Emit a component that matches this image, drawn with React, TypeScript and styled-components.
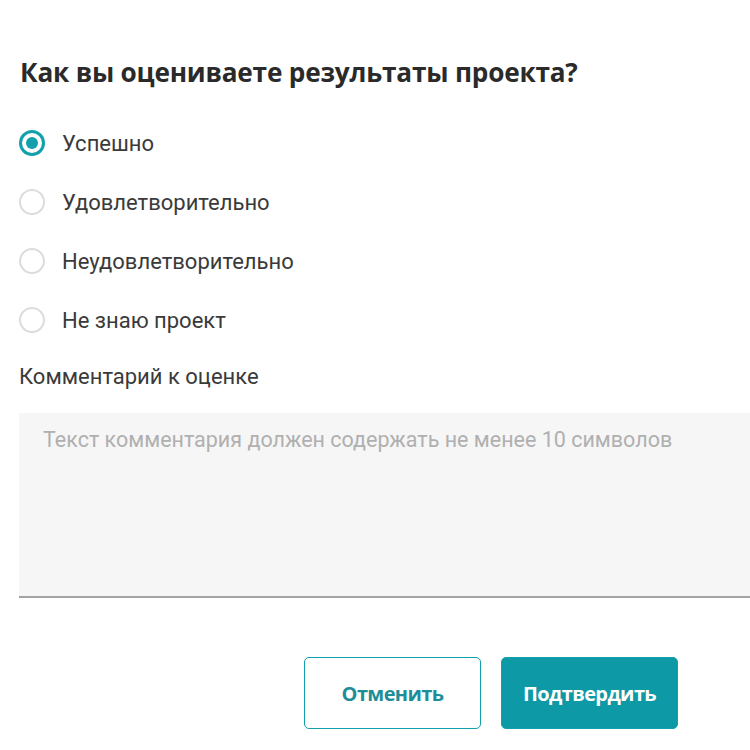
import React, { useState } from "react";
import styled, { createGlobalStyle } from "styled-components";

const Global = createGlobalStyle`
  html, body { margin: 0; padding: 0; background: #fff; }
  body { font-family: Roboto, "Liberation Sans", sans-serif; color: #333; }
  * { box-sizing: border-box; }
`;

const Page = styled.div`
  width: 750px;
  height: 750px;
  overflow: hidden;
  padding: 56px 0 0 19px;
  display: flex;
  flex-direction: column;
`;

const Title = styled.h2`
  margin: 0 0 0 1px;
  font-family: "Open Sans", sans-serif;
  font-weight: 700;
  font-size: 26.2px;
  line-height: 32px;
  letter-spacing: -0.2px;
  color: #2a2a2a;
`;

const Options = styled.div`
  margin-top: 37px;
  display: flex;
  flex-direction: column;
  gap: 23px;
`;

const Option = styled.label`
  display: flex;
  align-items: center;
  gap: 17px;
  height: 36px;
  cursor: pointer;
`;

const Circle = styled.span<{ $checked: boolean }>`
  width: 26px;
  height: 26px;
  border-radius: 50%;
  border: ${(p) => (p.$checked ? "3px solid #13a0ad" : "2px solid #dcdcdc")};
  display: flex;
  align-items: center;
  justify-content: center;
  &::after {
    content: "";
    width: 12px;
    height: 12px;
    border-radius: 50%;
    background: #13a0ad;
    display: ${(p) => (p.$checked ? "block" : "none")};
  }
`;

const LabelText = styled.span`
  font-size: 22px;
  color: #3a3a3a;
`;

const CommentLabel = styled.div`
  margin-top: 24px;
  font-size: 22px;
  color: #3a3a3a;
  line-height: 30px;
`;

const TextArea = styled.textarea`
  margin-top: 21px;
  width: 740px;
  height: 185px;
  border: none;
  border-bottom: 2px solid #a3a3a3;
  background: #f6f6f6;
  padding: 14px 24px;
  font-family: Roboto, sans-serif;
  font-size: 21.5px;
  color: #333;
  resize: none;
  outline: none;
  &::placeholder { color: #b0b0b0; }
`;

const Buttons = styled.div`
  margin-top: 59px;
  display: flex;
  gap: 20px;
  padding-left: 285px;
`;

const Button = styled.button<{ $primary?: boolean }>`
  width: 177px;
  height: 72px;
  border-radius: 5px;
  border: 1.5px solid #13a0ad;
  background: ${(p) => (p.$primary ? "#0d99a5" : "#fff")};
  color: ${(p) => (p.$primary ? "#fff" : "#1d8e99")};
  font-family: "Open Sans", sans-serif;
  font-weight: 700;
  font-size: 20px;
  letter-spacing: -0.6px;
  cursor: pointer;
`;

const options = ["Успешно", "Удовлетворительно", "Неудовлетворительно", "Не знаю проект"];

export default function App() {
  const [sel, setSel] = useState(0);
  return (
    <>
      <Global />
      <Page>
        <Title>Как вы оцениваете результаты проекта?</Title>
        <Options>
          {options.map((o, i) => (
            <Option key={o} onClick={() => setSel(i)}>
              <Circle $checked={sel === i} />
              <LabelText>{o}</LabelText>
            </Option>
          ))}
        </Options>
        <CommentLabel>Комментарий к оценке</CommentLabel>
        <TextArea placeholder="Текст комментария должен содержать не менее 10 символов" />
        <Buttons>
          <Button>Отменить</Button>
          <Button $primary>Подтвердить</Button>
        </Buttons>
      </Page>
    </>
  );
}
